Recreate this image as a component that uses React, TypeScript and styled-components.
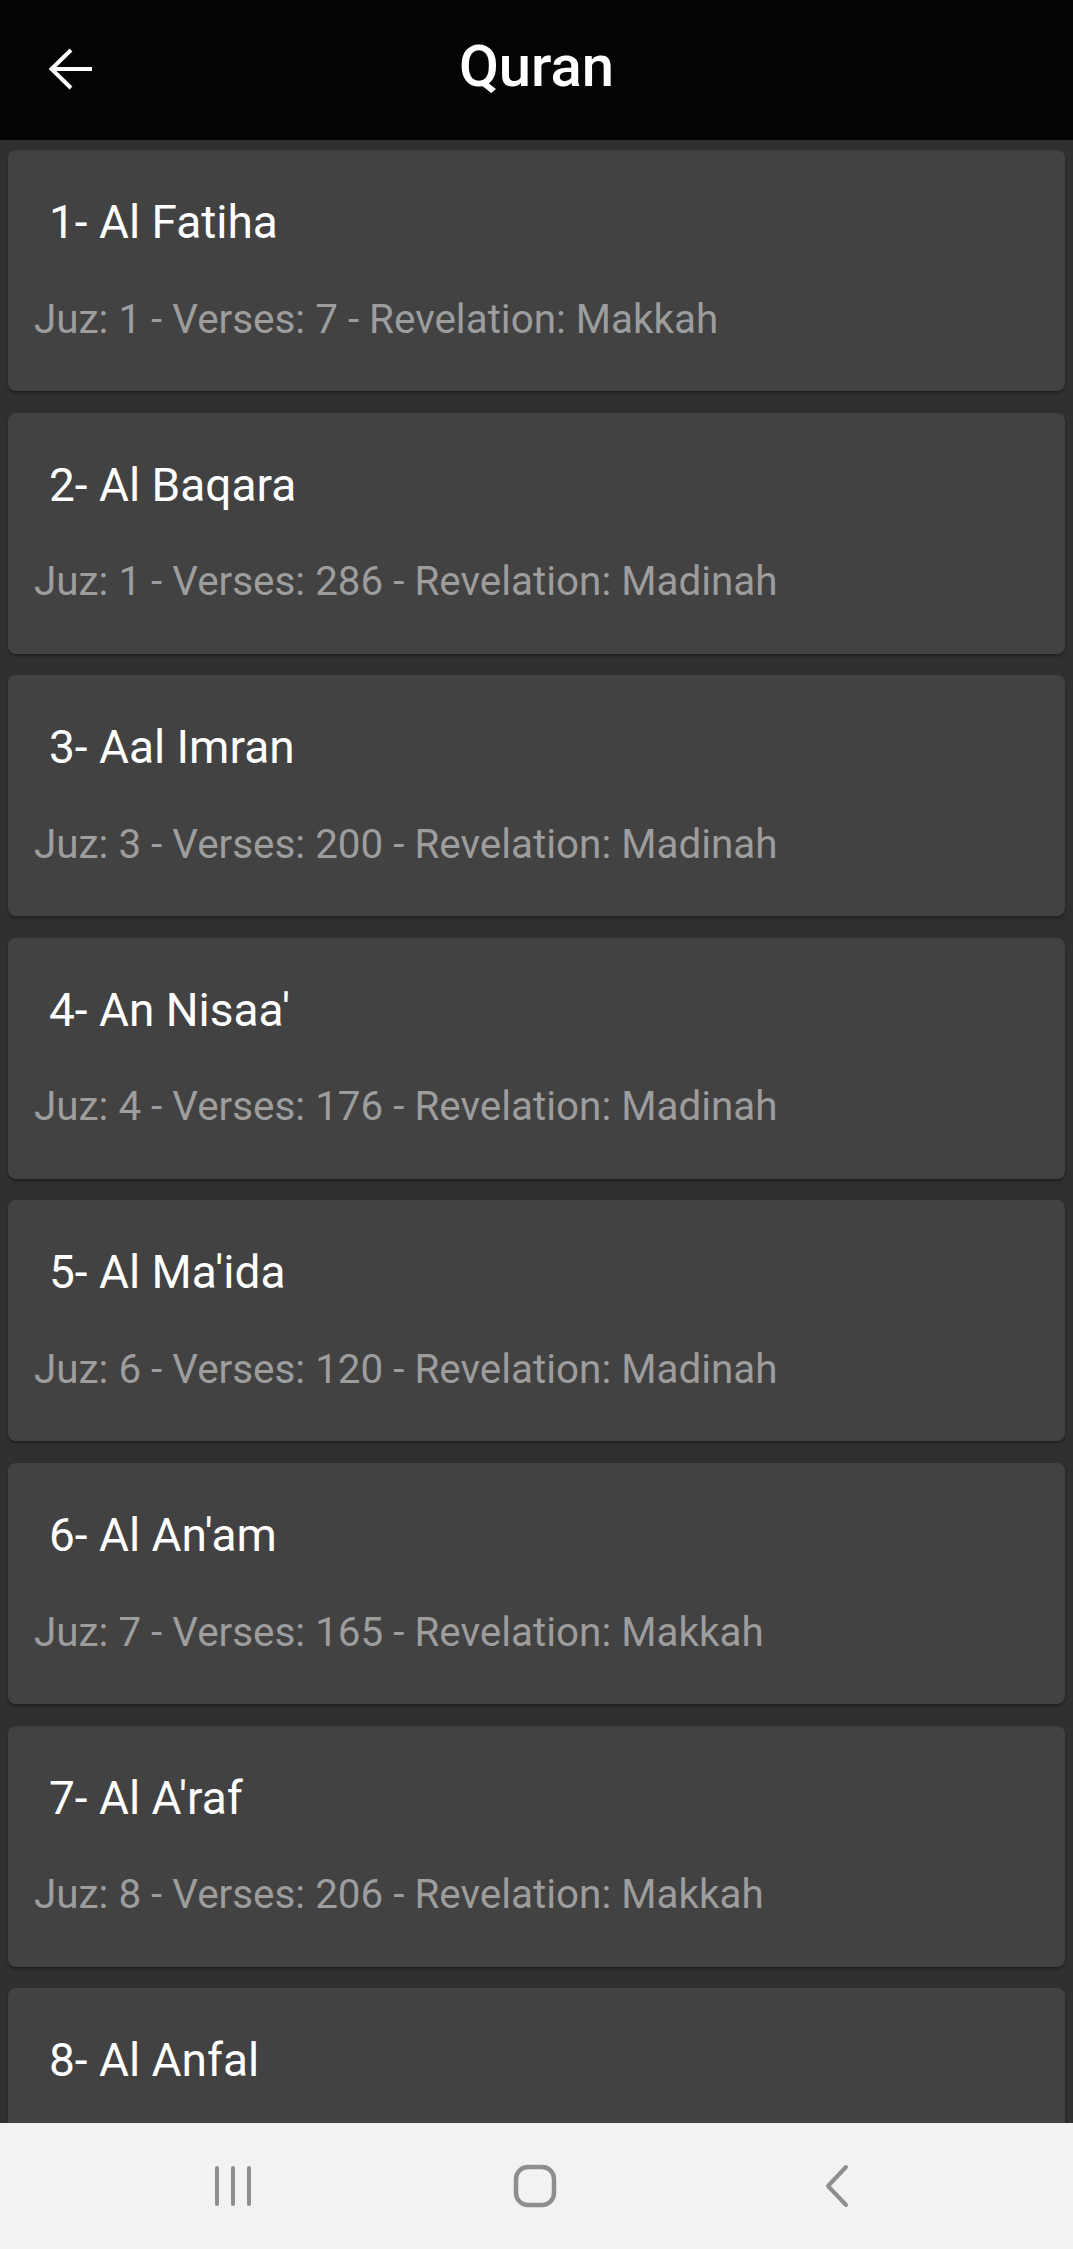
import { createGlobalStyle, styled } from 'styled-components';

const GlobalStyle = createGlobalStyle`
  html, body {
    margin: 0;
    padding: 0;
    background-color: #303030;
    font-family: Roboto, 'Liberation Sans', Arial, sans-serif;
  }
  * {
    box-sizing: border-box;
  }
`;

const Screen = styled.div`
  display: flex;
  flex-direction: column;
  height: 100vh;
  overflow: hidden;
  background-color: #303030;
`;

const Header = styled.header`
  display: flex;
  align-items: center;
  flex-shrink: 0;
  height: 140px;
  padding-bottom: 9px;
  background-color: #040404;
`;

const BackButton = styled.button`
  display: flex;
  align-items: center;
  width: 93px;
  height: 60px;
  padding: 0 0 0 47px;
  margin-top: 7px;
  background: transparent;
  border: none;
  cursor: pointer;
`;

const Title = styled.h1`
  flex: 1;
  margin: 0;
  color: #ffffff;
  font-size: 58px;
  font-weight: 500;
  line-height: 58px;
  text-align: center;
`;

const Spacer = styled.div`
  width: 93px;
`;

const List = styled.main`
  display: flex;
  flex-direction: column;
  gap: 21.6px;
  flex: 1;
  padding: 10px 8px 0;
  overflow: hidden;
`;

const Card = styled.div`
  display: flex;
  flex-direction: column;
  flex-shrink: 0;
  height: 241px;
  padding: 46px 26px 0;
  background-color: #424242;
  border-radius: 8px;
  box-shadow: 0 2px 3px rgba(0, 0, 0, 0.35);
`;

const SurahName = styled.span`
  padding-left: 15px;
  color: #ffffff;
  font-size: 46px;
  line-height: 53px;
`;

const SurahInfo = styled.span`
  margin-top: 46.7px;
  color: #9d9d9d;
  font-size: 40.4px;
  line-height: 47px;
  white-space: nowrap;
`;

const NavBar = styled.nav`
  display: grid;
  grid-template-columns: repeat(3, 302px);
  justify-content: center;
  align-items: center;
  flex-shrink: 0;
  height: 126px;
  padding-right: 4px;
  background-color: #f2f2f2;
`;

const NavSlot = styled.div`
  display: flex;
  justify-content: center;
  align-items: center;
`;

interface ISurah {
  num: number;
  name: string;
  juz: number;
  verses: number;
  revelation: string;
}

const surahs: ISurah[] = [
  { num: 1, name: 'Al Fatiha', juz: 1, verses: 7, revelation: 'Makkah' },
  { num: 2, name: 'Al Baqara', juz: 1, verses: 286, revelation: 'Madinah' },
  { num: 3, name: 'Aal Imran', juz: 3, verses: 200, revelation: 'Madinah' },
  { num: 4, name: "An Nisaa'", juz: 4, verses: 176, revelation: 'Madinah' },
  { num: 5, name: "Al Ma'ida", juz: 6, verses: 120, revelation: 'Madinah' },
  { num: 6, name: "Al An'am", juz: 7, verses: 165, revelation: 'Makkah' },
  { num: 7, name: "Al A'raf", juz: 8, verses: 206, revelation: 'Makkah' },
  { num: 8, name: 'Al Anfal', juz: 9, verses: 75, revelation: 'Madinah' },
];

const SurahCard = ({ num, name, juz, verses, revelation }: ISurah) => {
  return (
    <Card>
      <SurahName>
        {num}- {name}
      </SurahName>
      <SurahInfo>
        Juz: {juz} - Verses: {verses} - Revelation: {revelation}
      </SurahInfo>
    </Card>
  );
};

const App = () => {
  return (
    <Screen>
      <GlobalStyle />
      <Header>
        <BackButton aria-label="back">
          <svg width="46" height="44" viewBox="0 0 46 44" fill="none">
            <path d="M45 22H4M24 3L4.5 22L24 41" stroke="#ffffff" strokeWidth="4" />
          </svg>
        </BackButton>
        <Title>Quran</Title>
        <Spacer />
      </Header>
      <List>
        {surahs.map((surah) => (
          <SurahCard key={surah.num} {...surah} />
        ))}
      </List>
      <NavBar>
        <NavSlot>
          <svg width="40" height="42" viewBox="0 0 40 42" fill="none">
            <path d="M4 3V39M20 3V39M36 3V39" stroke="#8e8e8e" strokeWidth="4" strokeLinecap="round" />
          </svg>
        </NavSlot>
        <NavSlot>
          <svg width="44" height="44" viewBox="0 0 44 44" fill="none">
            <rect x="3" y="3" width="38" height="38" rx="12" stroke="#8e8e8e" strokeWidth="4.5" />
          </svg>
        </NavSlot>
        <NavSlot>
          <svg width="26" height="44" viewBox="0 0 26 44" fill="none">
            <path d="M22 3L4 22L22 41" stroke="#8e8e8e" strokeWidth="4" strokeLinecap="round" strokeLinejoin="round" />
          </svg>
        </NavSlot>
      </NavBar>
    </Screen>
  );
};

export default App;
